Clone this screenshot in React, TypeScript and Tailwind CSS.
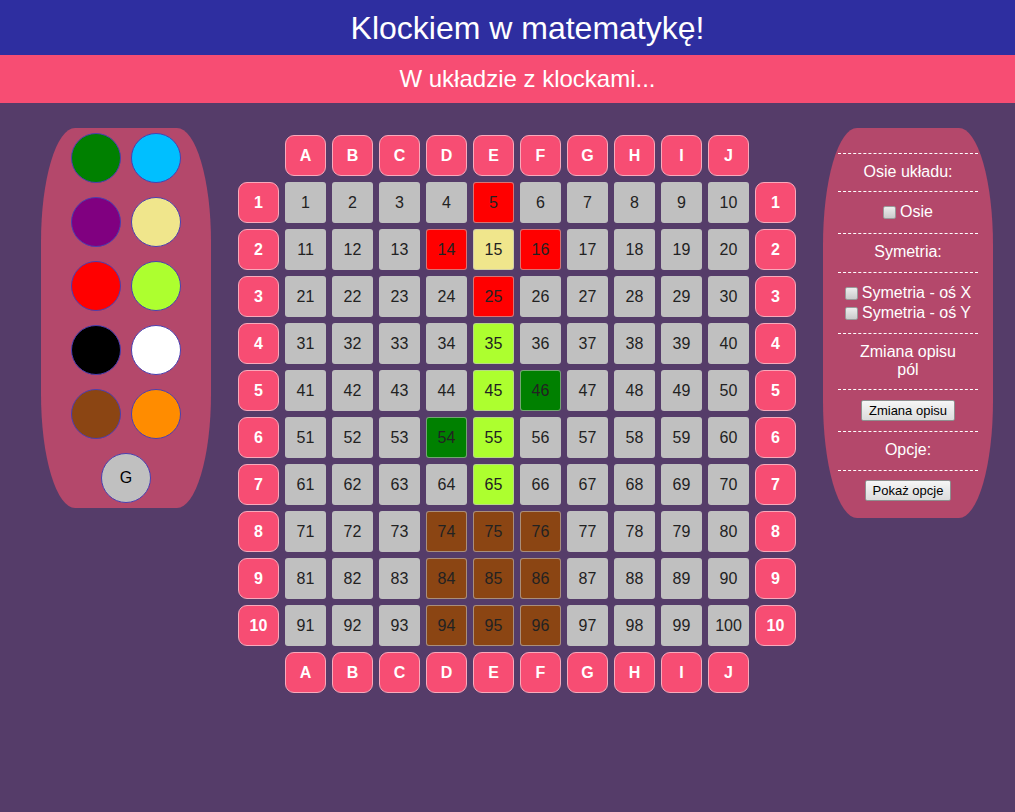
const colored: Record<number, string> = {
  5: "bg-[#ff0000]",
  14: "bg-[#ff0000]",
  15: "bg-[#f0e68c]",
  16: "bg-[#ff0000]",
  25: "bg-[#ff0000]",
  35: "bg-[#adff2f]",
  45: "bg-[#adff2f]",
  46: "bg-[#008000]",
  54: "bg-[#008000]",
  55: "bg-[#adff2f]",
  65: "bg-[#adff2f]",
  74: "bg-[#8b4513]",
  75: "bg-[#8b4513]",
  76: "bg-[#8b4513]",
  84: "bg-[#8b4513]",
  85: "bg-[#8b4513]",
  86: "bg-[#8b4513]",
  94: "bg-[#8b4513]",
  95: "bg-[#8b4513]",
  96: "bg-[#8b4513]",
};

const letters = ["A", "B", "C", "D", "E", "F", "G", "H", "I", "J"];

const palette = [
  "bg-[#008000]",
  "bg-[#00bfff]",
  "bg-[#800080]",
  "bg-[#f0e68c]",
  "bg-[#ff0000]",
  "bg-[#adff2f]",
  "bg-[#000000]",
  "bg-[#ffffff]",
  "bg-[#8b4513]",
  "bg-[#ff8c00]",
];

function Label({ text }: { text: string }) {
  return (
    <div className="w-[41px] h-[41px] flex items-center justify-center rounded-[9px] bg-[#f74d73] border border-[#f9a9bb] text-white font-bold text-[16px]">
      {text}
    </div>
  );
}

function Cell({ n }: { n: number }) {
  const bg = colored[n] ?? "bg-[#c0c0c0]";
  return (
    <div className={`w-[41px] h-[41px] flex items-center justify-center rounded-[3px] border border-[#c0c0c0]/60 text-[#222] text-[16px] ${bg}`}>
      {n}
    </div>
  );
}

function Dash() {
  return <div className="w-[140px] border-t border-dashed border-white" />;
}

function Check({ label }: { label: string }) {
  return (
    <div className="flex items-center justify-center h-[20px]">
      <span className="w-[13px] h-[13px] mr-[4px] rounded-[2px] border border-[#9a9a9a] bg-gradient-to-b from-[#ededed] to-[#cbcbcb]" />
      <span>{label}</span>
    </div>
  );
}

function Btn({ label }: { label: string }) {
  return (
    <div className="h-[21px] px-[7px] flex items-center border border-[#8f8f8f] rounded-[2px] bg-gradient-to-b from-[#f6f6f6] to-[#dcdcdc] text-black text-[13px] leading-none">
      {label}
    </div>
  );
}

export default function App() {
  const empty = <div className="w-[41px] h-[41px]" />;
  return (
    <div className="min-h-[812px] bg-[#553c69] font-['Liberation_Sans',Arial,sans-serif]">
      <div className="h-[55px] bg-[#2e2ea0] flex items-center justify-center pl-[40px] text-white text-[32px]">
        Klockiem w matematykę!
      </div>
      <div className="h-[48px] bg-[#f74d73] flex items-center justify-center pl-[40px] text-white text-[24px]">
        W układzie z klockami...
      </div>

      <div className="flex items-start pl-[41px] pt-[25px]">
        {/* palette */}
        <div className="w-[170px] h-[380px] bg-[#b4486b] rounded-[20%/30%] flex flex-col items-center pt-[5px]">
          <div className="grid grid-cols-2 gap-x-[10px] gap-y-[14px]">
            {palette.map((c) => (
              <div key={c} className={`w-[50px] h-[50px] rounded-full border border-[#4a3fb0] ${c}`} />
            ))}
          </div>
          <div className="mt-[14px] w-[50px] h-[50px] rounded-full border border-[#4a3fb0] bg-[#c0c0c0] flex items-center justify-center text-[16px] text-black">
            G
          </div>
        </div>

        {/* board */}
        <div className="ml-[27px] mt-[7px] grid grid-cols-[repeat(12,41px)] gap-[6px]">
          {empty}
          {letters.map((l) => (
            <Label key={"t" + l} text={l} />
          ))}
          {empty}
          {Array.from({ length: 10 }, (_, r) => (
            <div key={r} className="contents">
              <Label text={String(r + 1)} />
              {Array.from({ length: 10 }, (_, c) => (
                <Cell key={c} n={r * 10 + c + 1} />
              ))}
              <Label text={String(r + 1)} />
            </div>
          ))}
          {empty}
          {letters.map((l) => (
            <Label key={"b" + l} text={l} />
          ))}
          {empty}
        </div>

        {/* options */}
        <div className="ml-[27px] w-[170px] h-[390px] bg-[#b4486b] rounded-[20%/30%] flex flex-col items-center pt-[25px] text-white text-[16px] leading-[18px] text-center">
          <Dash />
          <div className="mt-[9px] mb-[10px]">Osie układu:</div>
          <Dash />
          <div className="mt-[10px] mb-[11px]">
            <Check label="Osie" />
          </div>
          <Dash />
          <div className="mt-[9px] mb-[11px]">Symetria:</div>
          <Dash />
          <div className="mt-[10px] mb-[10px]">
            <Check label="Symetria - oś X" />
            <Check label="Symetria - oś Y" />
          </div>
          <Dash />
          <div className="mt-[9px] mb-[10px] w-[100px]">Zmiana opisu pól</div>
          <Dash />
          <div className="mt-[10px] mb-[10px]">
            <Btn label="Zmiana opisu" />
          </div>
          <Dash />
          <div className="mt-[9px] mb-[11px]">Opcje:</div>
          <Dash />
          <div className="mt-[9px]">
            <Btn label="Pokaż opcje" />
          </div>
        </div>
      </div>
    </div>
  );
}
